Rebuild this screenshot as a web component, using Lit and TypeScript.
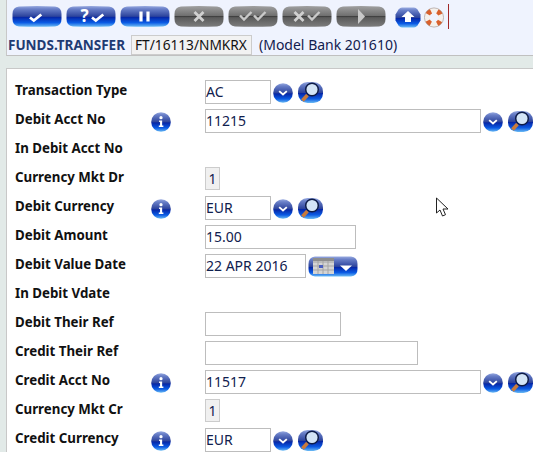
import { LitElement, html, css, svg } from "lit";
import { customElement } from "lit/decorators.js";

const defs = svg`<svg width="0" height="0" class="defs"><defs>
<linearGradient id="blue" x1="0" y1="0" x2="0" y2="1"><stop offset="0" stop-color="#98aae0"/><stop offset=".14" stop-color="#6a80c8"/><stop offset=".5" stop-color="#2c439c"/><stop offset=".54" stop-color="#0626a6"/><stop offset=".8" stop-color="#0a5ae4"/><stop offset="1" stop-color="#6cbcf4"/></linearGradient>
<linearGradient id="grey" x1="0" y1="0" x2="0" y2="1"><stop offset="0" stop-color="#a0a0a0"/><stop offset=".46" stop-color="#707070"/><stop offset=".5" stop-color="#3e3e3e"/><stop offset=".56" stop-color="#5a5a5a"/><stop offset="1" stop-color="#7c7c7c"/></linearGradient>
</defs></svg>`;

const CHECK = (x: number, y = 0) => svg`<path d="M${x - 7} ${14.5 + y}l3.800 3 7.500-6" fill="none" stroke="#fff" stroke-width="2.800" transform="translate(0,-3)"/>`;
const CHECKG = (x: number) => svg`<path d="M${x - 7} 9.500l4 4 7.500-7.500" fill="none" stroke="#c9c9c9" stroke-width="2.400"/>`;
const CROSS = (x: number) => svg`<path d="M${x - 4.500} 6l9 9m0-9l-9 9" fill="none" stroke="#d0d0d0" stroke-width="2.800"/>`;

function bar(fill: string, content: unknown) {
  return html`<svg class="bar" width="50" height="21" viewBox="0 0 50 21">
    <path d="M7 .5Q25 -.5 43 .5Q49.500 1 49.500 8V13Q49.500 20 43 20.500Q25 21 7 20.500Q.5 20 .5 13V8Q.5 1 7 .5z" fill="url(#${fill})"/>${content}</svg>`;
}

const BUTTONS = [
  bar("blue", CHECK(25)),
  bar("blue", svg`<text x="14.500" y="15.500" class="q">?</text>${CHECK(33)}`),
  bar("blue", svg`<path d="M21 5.500v10m7-10v10" stroke="#fff" stroke-width="3.200"/>`),
  bar("grey", CROSS(25)),
  bar("grey", svg`${CHECKG(19)}${CHECKG(33)}`),
  bar("grey", svg`${CROSS(17)}${CHECKG(33)}`),
  bar("grey", svg`<path d="M22 3l7 7.500-7 7.500z" fill="#c9c9c9"/>`),
];

const DOWN = html`<svg class="ic" width="20" height="20" viewBox="0 0 21 21"><circle cx="10.500" cy="10.500" r="10.300" fill="url(#blue)"/><path d="M6.500 8.500l4 3.500 4-3.500" fill="none" stroke="#fff" stroke-width="2"/></svg>`;
const LENS = html`<svg class="ic lens" width="25" height="21" viewBox="0 0 25 21"><rect x="0" y="0" width="25" height="21" rx="9.500" fill="url(#blue)"/><path d="M9.500 13l-5 5.500" stroke="#c87a3c" stroke-width="3.600"/><circle cx="14" cy="7.500" r="6.300" fill="#d3e4f6" stroke="#0e1c48" stroke-width="1.500"/></svg>`;
const INFO = html`<svg class="ic" width="20" height="20" viewBox="0 0 21 21"><circle cx="10.500" cy="10.500" r="10.300" fill="url(#blue)"/><circle cx="10.500" cy="6" r="1.700" fill="#fff"/><path d="M8.500 9h3.200v5.200h1.300v1.600H8.200v-1.600h1.300v-3.600H8.500z" fill="#fff"/></svg>`;
const CAL = html`<svg class="ic" width="50" height="21" viewBox="0 0 50 21"><path d="M7 .5H43Q49.500 1 49.500 8V13Q49.500 20 43 20.500H7Q.5 20 .5 13V8Q.5 1 7 .5z" fill="url(#blue)"/><rect x="5" y="2" width="21" height="16" fill="#d4d4d4"/><path d="M5 6h21M5 10h21M5 14h21M10 2v16M15 2v16M20 2v16" stroke="#a4a4a4" stroke-width="1"/><rect x="5" y="2" width="21" height="3" fill="#8d8d8d"/><rect x="11" y="9" width="4" height="3" fill="#4a5fc0"/><path d="M32 9.500h12l-6 5.500z" fill="#fff"/></svg>`;

type Row = { label: string; info?: boolean; kind?: "input" | "badge" | "date" | "none"; w?: number; value?: string; down?: boolean; lens?: boolean };

const ROWS: Row[] = [
  { label: "Transaction Type", w: 66, value: "AC", down: true, lens: true },
  { label: "Debit Acct No", info: true, w: 276, value: "11215", down: true, lens: true },
  { label: "In Debit Acct No", kind: "none" },
  { label: "Currency Mkt Dr", kind: "badge", value: "1" },
  { label: "Debit Currency", info: true, w: 66, value: "EUR", down: true, lens: true },
  { label: "Debit Amount", w: 151, value: "15.00" },
  { label: "Debit Value Date", w: 101, value: "22 APR 2016", kind: "date" },
  { label: "In Debit Vdate", kind: "none" },
  { label: "Debit Their Ref", w: 136, value: "" },
  { label: "Credit Their Ref", w: 213, value: "" },
  { label: "Credit Acct No", info: true, w: 276, value: "11517", down: true, lens: true },
  { label: "Currency Mkt Cr", kind: "badge", value: "1" },
  { label: "Credit Currency", info: true, w: 66, value: "EUR", down: true, lens: true },
];

@customElement("app-root")
export class AppRoot extends LitElement {
  static styles = css`
    :host { display: block; position: relative; width: 533px; height: 452px; overflow: hidden; background: #e2eae8; font-family: "Noto Sans", "DejaVu Sans", sans-serif; }
    .defs { position: absolute; }
    .panel { margin-left: 6px; height: 56px; box-sizing: border-box; background: #eff3fe; border-left: 1px solid #c8c8c8; border-bottom: 1px solid #c0c0c0; padding-top: 6px; }
    .tools { display: flex; align-items: flex-start; padding-left: 5px; height: 24px; }
    .bar { display: block; margin-right: 4px; flex: none; overflow: visible; }
    .q { font: bold 17px "Noto Sans", sans-serif; fill: #fff; }
    .up { margin-left: 5px; margin-right: 3px; }
    .buoy { margin-right: 4px; }
    .redline { width: 1px; height: 25px; margin-top: -2px; background: #a02828; }
    .title { display: flex; align-items: center; height: 21px; margin-top: 4px; padding-left: 1px; }
    .app { font-weight: 700; font-size: 13.500px; color: #1f3b73; width: 123px; white-space: nowrap; }
    .id { height: 20px; box-sizing: border-box; width: 121px; border: 1px solid #ccc; background: #f2f2f2; font-size: 13.700px; line-height: 18px; padding-left: 3px; color: #111; white-space: nowrap; overflow: hidden; }
    .ver { margin-left: 7px; font-size: 14px; color: #12204e; }
    .form { margin: 12px 0 0 6px; background: #fff; border-top: 1px solid #c8c8c8; border-left: 1px solid #c8c8c8; height: 384px; padding-top: 8px; box-sizing: border-box; }
    .row { display: grid; grid-template-columns: 127px 63px 1fr; align-items: center; height: 29px; padding-left: 8px; }
    .label { font-weight: 700; font-size: 13.300px; color: #111; white-space: nowrap; position: relative; top: -1.500px; }
    .infoc { display: flex; padding-left: 9px; padding-top: 1px; }
    .ctl { display: flex; align-items: center; gap: 2px; }
    .inp { height: 24px; box-sizing: border-box; border: 1px solid #bdbdbd; background: #fff; font-size: 14px; line-height: 22px; padding-left: 0; color: #10204e; white-space: nowrap; }
    .badge { height: 23px; width: 15px; box-sizing: border-box; border: 1px solid #ccc; background: #f0f0f0; font-size: 14px; line-height: 22px; text-align: center; color: #10204e; }
    .ic { display: block; flex: none; position: relative; top: 1px; }
    .lens { margin-left: 3px; top: 1px; }
    .cursor { position: absolute; left: 436px; top: 197px; }
  `;

  renderRow(r: Row) {
    return html`<div class="row">
      <div class="label">${r.label}</div>
      <div class="infoc">${r.info ? INFO : ""}</div>
      <div class="ctl">
        ${r.kind === "badge" ? html`<div class="badge">${r.value}</div>` : ""}
        ${r.kind === "none" || r.kind === "badge" ? "" : html`<div class="inp" style="width:${r.w}px">${r.value}</div>`}
        ${r.down ? DOWN : ""}${r.lens ? LENS : ""}${r.kind === "date" ? CAL : ""}
      </div>
    </div>`;
  }

  render() {
    return html`${defs}
      <div class="panel">
        <div class="tools">
          ${BUTTONS}
          <svg class="ic up" width="26" height="21" viewBox="0 0 26 21"><path d="M7 .5h12q2 0 3.500 2l3 5v6l-3 5q-1.500 2-3.500 2H7q-2 0-3.500-2l-3-5v-6l3-5q1.500-2 3.500-2z" fill="url(#blue)"/><path d="M13 4l6.500 6h-3.500v5h-6v-5H6.500z" fill="#fff"/></svg>
          <svg class="ic buoy" width="20" height="21" viewBox="0 0 20 21"><circle cx="10" cy="10.500" r="7" fill="none" stroke="#f4f0ec" stroke-width="5"/><circle cx="10" cy="10.500" r="7" fill="none" stroke="#d9602c" stroke-width="5" stroke-dasharray="4.500 6.500" stroke-dashoffset="2.250" transform="rotate(45 10 10.500)"/><circle cx="10" cy="10.500" r="9.600" fill="none" stroke="#a09088" stroke-width=".6"/></svg>
          <div class="redline"></div>
        </div>
        <div class="title">
          <div class="app">FUNDS.TRANSFER</div>
          <div class="id">FT/16113/NMKRX</div>
          <div class="ver">(Model Bank 201610)</div>
        </div>
      </div>
      <div class="form">${ROWS.map((r) => this.renderRow(r))}</div>
      <svg class="cursor" width="14" height="20" viewBox="0 0 14 20"><path d="M.5 1v15l3.500-3 2.500 6 3-1.300-2.500-5.700h5z" fill="#fff" stroke="#222" stroke-width="1"/></svg>`;
  }
}
